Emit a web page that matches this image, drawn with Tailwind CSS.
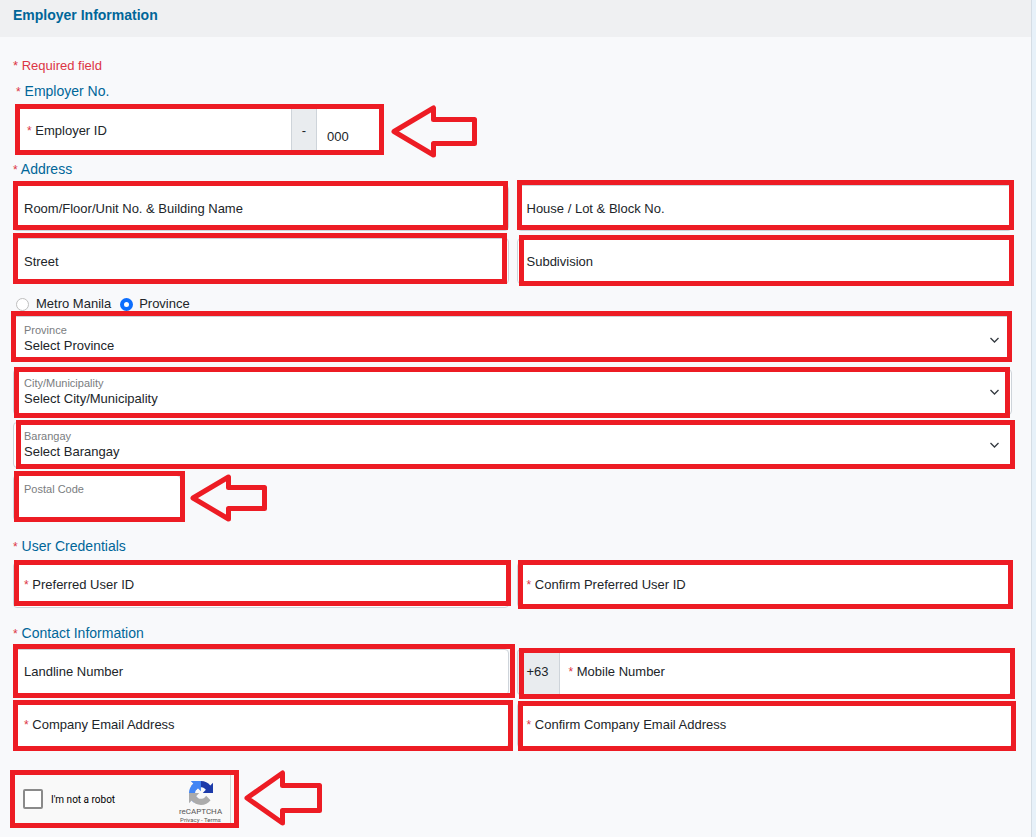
<!DOCTYPE html>
<html lang="en">
<head>
    <meta charset="UTF-8">
    <meta name="viewport" content="width=device-width, initial-scale=1.0">
    <title>Employer Information</title>
    <script src="https://cdn.jsdelivr.net/npm/@tailwindcss/browser@4"></script>
</head>
<body class="bg-[#e7f1f9] font-['Liberation_Sans',Arial,sans-serif] text-[13px] text-[#212529] overflow-hidden">
    <main class="mr-1 min-h-screen bg-[#f8f9fb] border-r border-[#d5dde5]">

        <header class="h-[37px] px-[13px] pt-[5px] bg-[#eff0f2]">
            <h1 class="text-sm leading-5 font-bold text-[#006699]">Employer Information</h1>
        </header>

        <form class="pl-[13px] pr-[19px] pt-[19px]">
            <p class="leading-5 text-[#dc3545]">* Required field</p>

            <!-- Employer number -->
            <h2 class="mt-[5px] pl-[3px] text-sm leading-5 text-[#006699]"><span class="text-xs text-[#dc3545]">*</span> Employer No.</h2>
            <div class="mt-[7px] flex items-center">
                <div class="relative flex w-[371px] h-[46px] pl-[3px]">
                    <div class="relative flex-1">
                        <input id="employerId" type="text" class="w-full h-full px-[10px] bg-white border border-[#ced4da] rounded-l">
                        <label for="employerId" class="absolute left-[11px] top-[13px] leading-5"><span class="text-xs text-[#dc3545]">*</span> Employer ID</label>
                    </div>
                    <span class="flex w-6 items-center justify-center bg-[#e9ecef]">-</span>
                    <input type="text" value="000" aria-label="Branch code" class="w-[68px] h-full px-[10px] pt-[11px] bg-white border border-[#ced4da] rounded-r">
                    <span class="absolute left-[2px] right-0 -top-1 -bottom-px border-5 border-[#ed1c24] pointer-events-none"></span>
                </div>
                <svg class="ml-[7px] w-[86px] h-[53px] -my-1" viewBox="0 0 86 53" fill="none" stroke="#ed1c24" stroke-width="5" stroke-linejoin="round">
                    <path d="M3 26.5 L42.500 3 V14.500 H83.500 V38.500 H42.500 V50 Z"/>
                </svg>
            </div>

            <!-- Address -->
            <h2 class="mt-[5px] text-sm leading-5 text-[#006699]"><span class="text-xs text-[#dc3545]">*</span> Address</h2>
            <div class="mt-[6px] grid grid-cols-2 gap-x-2 gap-y-[7px]">
                <div class="relative h-[46px]">
                    <input id="room" type="text" class="w-full h-full px-[10px] bg-white border border-[#ced4da] rounded">
                    <label for="room" class="absolute left-[11px] top-[14px] leading-5">Room/Floor/Unit No. &amp; Building Name</label>
                    <span class="absolute left-0 right-px -top-1 bottom-px border-5 border-[#ed1c24] pointer-events-none"></span>
                </div>
                <div class="relative h-[46px]">
                    <input id="house" type="text" class="w-full h-full px-[10px] bg-white border border-[#ced4da] rounded">
                    <label for="house" class="absolute left-[10px] top-[14px] leading-5">House / Lot &amp; Block No.</label>
                    <span class="absolute left-0 -right-[2px] -top-[5px] bottom-px border-5 border-[#ed1c24] pointer-events-none"></span>
                </div>
                <div class="relative h-[46px]">
                    <input id="street" type="text" class="w-full h-full px-[10px] bg-white border border-[#ced4da] rounded">
                    <label for="street" class="absolute left-[11px] top-[14px] leading-5">Street</label>
                    <span class="absolute left-0 right-[2px] -top-[5px] bottom-0 border-5 border-[#ed1c24] pointer-events-none"></span>
                </div>
                <div class="relative h-[46px]">
                    <input id="subdivision" type="text" class="w-full h-full px-[10px] bg-white border border-[#ced4da] rounded">
                    <label for="subdivision" class="absolute left-[10px] top-[14px] leading-5">Subdivision</label>
                    <span class="absolute left-[2px] -right-[2px] -top-[3px] -bottom-[2px] border-5 border-[#ed1c24] pointer-events-none"></span>
                </div>
            </div>

            <div class="mt-[10px] flex items-center gap-[9px] pl-[3px] leading-5">
                <label class="flex items-center gap-[7px]">
                    <input type="radio" name="region" class="appearance-none size-[13px] bg-white border border-[#bfbfbf] rounded-full checked:border-4 checked:border-[#0d6efd]">
                    Metro Manila
                </label>
                <label class="flex items-center gap-[6px]">
                    <input type="radio" name="region" checked class="appearance-none size-[13px] bg-white border border-[#bfbfbf] rounded-full checked:border-4 checked:border-[#0d6efd]">
                    Province
                </label>
            </div>

            <div class="mt-[2px] flex flex-col gap-[7px]">
                <div class="relative h-[46px]">
                    <select id="province" class="appearance-none w-full h-full px-[10px] pt-[13px] bg-white border border-[#ced4da] rounded">
                        <option>Select Province</option>
                    </select>
                    <label for="province" class="absolute left-[11px] top-[6px] text-[11px] leading-4 text-[#7a7d80]">Province</label>
                    <svg class="absolute right-3 top-[18px] w-[11px] h-3 pointer-events-none" viewBox="0 0 11 12" fill="none" stroke="#343a40" stroke-width="1.3"><path d="M1.500 4 L5.500 8 L9.500 4"/></svg>
                    <span class="absolute -left-[2px] right-0 -top-[5px] bottom-0 border-5 border-[#ed1c24] pointer-events-none"></span>
                </div>
                <div class="relative h-[46px]">
                    <select id="city" class="appearance-none w-full h-full px-[10px] pt-[13px] bg-white border border-[#ced4da] rounded">
                        <option>Select City/Municipality</option>
                    </select>
                    <label for="city" class="absolute left-[11px] top-[6px] text-[11px] leading-4 text-[#7a7d80]">City/Municipality</label>
                    <svg class="absolute right-3 top-[17px] w-[11px] h-3 pointer-events-none" viewBox="0 0 11 12" fill="none" stroke="#343a40" stroke-width="1.3"><path d="M1.500 4 L5.500 8 L9.500 4"/></svg>
                    <span class="absolute left-px right-[2px] -top-[2px] -bottom-[3px] border-5 border-[#ed1c24] pointer-events-none"></span>
                </div>
                <div class="relative h-[46px]">
                    <select id="barangay" class="appearance-none w-full h-full px-[10px] pt-[13px] bg-white border border-[#ced4da] rounded">
                        <option>Select Barangay</option>
                    </select>
                    <label for="barangay" class="absolute left-[11px] top-[6px] text-[11px] leading-4 text-[#7a7d80]">Barangay</label>
                    <svg class="absolute right-3 top-[17px] w-[11px] h-3 pointer-events-none" viewBox="0 0 11 12" fill="none" stroke="#343a40" stroke-width="1.3"><path d="M1.500 4 L5.500 8 L9.500 4"/></svg>
                    <span class="absolute left-[3px] -right-[3px] -top-[2px] -bottom-px border-5 border-[#ed1c24] pointer-events-none"></span>
                </div>
                <div class="flex items-center">
                    <div class="relative w-[168px] h-[46px]">
                        <input id="postal" type="text" class="w-full h-full px-[10px] pt-[13px] bg-white border border-[#ced4da] rounded">
                        <label for="postal" class="absolute left-[11px] top-[6px] text-[11px] leading-4 text-[#7a7d80]">Postal Code</label>
                        <span class="absolute left-px -right-1 -top-1 -bottom-px border-5 border-[#ed1c24] pointer-events-none"></span>
                    </div>
                    <svg class="ml-[9px] w-[77px] h-12 -my-1" viewBox="0 0 77 48" fill="none" stroke="#ed1c24" stroke-width="5" stroke-linejoin="round">
                        <path d="M3 24 L38.500 3 V13.500 H74.500 V34.500 H38.500 V45 Z"/>
                    </svg>
                </div>
            </div>

            <!-- User credentials -->
            <h2 class="mt-[15px] text-sm leading-5 text-[#006699]"><span class="text-xs text-[#dc3545]">*</span> User Credentials</h2>
            <div class="mt-[6px] grid grid-cols-2 gap-x-2">
                <div class="relative h-[46px]">
                    <input id="userId" type="text" class="w-full h-full px-[10px] bg-white border border-[#ced4da] rounded">
                    <label for="userId" class="absolute left-[11px] top-[13px] leading-5"><span class="text-xs text-[#dc3545]">*</span> Preferred User ID</label>
                    <span class="absolute left-px -right-[2px] -top-[2px] bottom-[2px] border-5 border-[#ed1c24] pointer-events-none"></span>
                </div>
                <div class="relative h-[46px]">
                    <input id="userId2" type="text" class="w-full h-full px-[10px] bg-white border border-[#ced4da] rounded">
                    <label for="userId2" class="absolute left-[10px] top-[13px] leading-5"><span class="text-xs text-[#dc3545]">*</span> Confirm Preferred User ID</label>
                    <span class="absolute left-px -right-px -top-[2px] -bottom-px border-5 border-[#ed1c24] pointer-events-none"></span>
                </div>
            </div>

            <!-- Contact information -->
            <h2 class="mt-[15px] text-sm leading-5 text-[#006699]"><span class="text-xs text-[#dc3545]">*</span> Contact Information</h2>
            <div class="mt-[6px] grid grid-cols-2 gap-x-2 gap-y-[7px]">
                <div class="relative h-[46px]">
                    <input id="landline" type="text" class="w-full h-full px-[10px] bg-white border border-[#ced4da] rounded">
                    <label for="landline" class="absolute left-[11px] top-[13px] leading-5">Landline Number</label>
                    <span class="absolute left-0 -right-[6px] -top-[5px] -bottom-[3px] border-5 border-[#ed1c24] pointer-events-none"></span>
                </div>
                <div class="relative flex h-[46px]">
                    <span class="flex w-[42px] items-center pl-[9px] leading-5 bg-[#e9ecef] border border-r-0 border-[#ced4da] rounded-l">+63</span>
                    <div class="relative flex-1">
                        <input id="mobile" type="text" class="w-full h-full px-[10px] bg-white border border-[#ced4da] rounded-r">
                        <label for="mobile" class="absolute left-[10px] top-[13px] leading-5"><span class="text-xs text-[#dc3545]">*</span> Mobile Number</label>
                    </div>
                    <span class="absolute left-[2px] -right-[3px] -top-px -bottom-1 border-5 border-[#ed1c24] pointer-events-none"></span>
                </div>
                <div class="relative h-[46px]">
                    <input id="email" type="email" class="w-full h-full px-[10px] bg-white border border-[#ced4da] rounded">
                    <label for="email" class="absolute left-[11px] top-[13px] leading-5"><span class="text-xs text-[#dc3545]">*</span> Company Email Address</label>
                    <span class="absolute left-0 -right-1 -top-[2px] -bottom-[3px] border-5 border-[#ed1c24] pointer-events-none"></span>
                </div>
                <div class="relative h-[46px]">
                    <input id="email2" type="email" class="w-full h-full px-[10px] bg-white border border-[#ced4da] rounded">
                    <label for="email2" class="absolute left-[10px] top-[13px] leading-5"><span class="text-xs text-[#dc3545]">*</span> Confirm Company Email Address</label>
                    <span class="absolute left-px -right-1 -top-px -bottom-[3px] border-5 border-[#ed1c24] pointer-events-none"></span>
                </div>
            </div>

            <!-- Captcha -->
            <div class="mt-[22px] -ml-[3px] flex items-start font-['Roboto','Liberation_Sans',sans-serif]">
                <div class="flex w-[229px] h-[58px] border-5 border-[#ed1c24] bg-[#f9f9f9]">
                    <label class="flex flex-1 items-center gap-2 pl-2 text-[10px] text-black">
                        <input type="checkbox" class="appearance-none size-5 bg-white border-2 border-[#8a8a8a] rounded-xs">
                        I'm not a robot
                    </label>
                    <div class="mr-[3px] flex w-[60px] flex-col items-center pt-[6px] border-r border-[#d3d3d3] text-[#555]">
                        <svg class="size-6 shrink-0" viewBox="0 0 64 64">
                            <path fill="#1c3aa9" d="M64 31.955l-.033-1.370V4.687l-7.160 7.160C50.948 4.674 42.033.093 32.050.093c-10.400 0-19.622 4.960-25.458 12.640l11.736 11.860a15.550 15.550 0 0 1 4.754-5.334c2.050-1.600 4.952-2.906 8.968-2.906.485 0 .860.057 1.135.163 4.976.393 9.288 3.140 11.828 7.124l-8.307 8.307L64 31.953"/>
                            <path fill="#4285f4" d="M31.862.094l-1.370.033H4.594l7.160 7.160C4.580 13.147 0 22.060 0 32.046c0 10.400 4.960 19.622 12.640 25.458L24.500 45.768a15.550 15.550 0 0 1-5.334-4.754c-1.600-2.050-2.906-4.952-2.906-8.968 0-.485.057-.860.163-1.135.393-4.976 3.140-9.288 7.124-11.828l8.307 8.307L31.860.095"/>
                            <path fill="#ababab" d="M.001 32.045l.033 1.370v25.898l7.160-7.160c5.860 7.173 14.774 11.754 24.760 11.754 10.400 0 19.622-4.960 25.458-12.640l-11.736-11.860a15.550 15.550 0 0 1-4.754 5.334c-2.050 1.600-4.952 2.906-8.968 2.906-.485 0-.860-.057-1.135-.163-4.976-.393-9.288-3.140-11.828-7.124l8.307-8.307c-10.522.040-22.400.066-27.295-.005"/>
                        </svg>
                        <span class="mt-[2px] text-[8px] leading-[9px]">reCAPTCHA</span>
                        <span class="text-[6px] leading-[7px]"><a href="#">Privacy</a> - <a href="#">Terms</a></span>
                    </div>
                </div>
                <svg class="ml-[5px] w-[78px] h-14" viewBox="0 0 78 56" fill="none" stroke="#ed1c24" stroke-width="5" stroke-linejoin="round">
                    <path d="M3 28 L38.500 3 V15.500 H75.500 V40.500 H38.500 V53 Z"/>
                </svg>
            </div>
        </form>
    </main>
</body>
</html>
